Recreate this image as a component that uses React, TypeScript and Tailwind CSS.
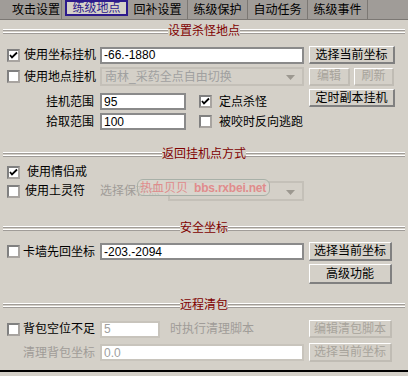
import React from "react";

const F = { fontFamily: '"Liberation Sans", "Noto Sans CJK SC", sans-serif' };

function Check({ checked }: { checked?: boolean }) {
  return (
    <div className="w-[13px] h-[13px] bg-white border-2 border-t-[#808080] border-l-[#808080] border-b-[#a8a4a0] border-r-[#a8a4a0] flex items-center justify-center shrink-0">
      {checked && (
        <svg width="9" height="9" viewBox="0 0 9 9">
          <path d="M1 4 L3 6.5 L8 1.5" stroke="#000" strokeWidth="1.8" fill="none" />
        </svg>
      )}
    </div>
  );
}

function Btn({ children, w, h = 18, disabled }: { children: React.ReactNode; w: number; h?: number; disabled?: boolean }) {
  return (
    <div
      style={{ width: w, height: h }}
      className={
        "flex items-center justify-center text-[12px] bg-[#d4d0c8] border-t border-l border-b-2 border-r-2 border-t-white border-l-white shrink-0 whitespace-nowrap " +
        (disabled ? "border-b-[#c0bcb4] border-r-[#c0bcb4] text-[#a8a49c]" : "border-b-[#808080] border-r-[#808080] text-black")
      }
    >
      {children}
    </div>
  );
}

function Input({ value, w, h = 17, disabled }: { value: string; w: number; h?: number; disabled?: boolean }) {
  return (
    <div
      style={{ width: w, height: h }}
      className={
        "bg-white border-2 flex items-center pl-[2px] text-[12px] shrink-0 " +
        (disabled ? "border-[#c8c4bc] text-[#a0a0a0]" : "border-[#8a8a8a] text-black")
      }
    >
      {value}
    </div>
  );
}

function Header({ title }: { title: string }) {
  const Line = () => (
    <div className="flex-1 flex flex-col">
      <div className="h-[1px] bg-white" />
      <div className="h-[1px] bg-[#a09c98]" />
      <div className="h-[1px]" />
      <div className="h-[1px] bg-white" />
      <div className="h-[1px] bg-[#a09c98]" />
    </div>
  );
  return (
    <div className="flex items-center h-[12px] px-[3px]">
      <Line />
      <span className="text-[12px] text-[#800000] leading-[12px] whitespace-nowrap">{title}</span>
      <Line />
    </div>
  );
}

export default function App() {
  const tabs = ["攻击设置", "练级地点", "回补设置", "练级保护", "自动任务", "练级事件"];
  return (
    <div style={F} className="w-[408px] h-[376px] bg-[#d4d0c8] relative overflow-hidden text-[12px] leading-[14px] text-black">
      {/* tab bar */}
      <div className="h-[20px] bg-[#a09c98] border-b border-[#7c7874] flex items-start">
        <div className="w-[62px] h-[19px] flex items-center pl-[12px] border-r border-[#7c7874] whitespace-nowrap">{tabs[0]}</div>
        <div className="w-[3px]" />
        <div className="w-[63px] h-[16px] border-2 border-[#2c1a8c] bg-[#d4d0c8] text-[#2c1a8c] flex items-center justify-center whitespace-nowrap">{tabs[1]}</div>
        {tabs.slice(2).map((t) => (
          <div key={t} className="w-[60px] h-[19px] flex items-center justify-center border-r border-[#7c7874] whitespace-nowrap">
            {t}
          </div>
        ))}
      </div>

      <div className="mt-[5px]">
        <Header title="设置杀怪地点" />
      </div>

      {/* section 1 */}
      <div className="pl-[7px]">
        <div className="flex items-center h-[18px] mt-[9px]">
          <div className="w-[93px] flex items-center gap-[4px]">
            <Check checked />
            <span>使用坐标挂机</span>
          </div>
          <Input value="-66.-1880" w={204} />
          <div className="w-[5px]" />
          <Btn w={86}>选择当前坐标</Btn>
        </div>
        <div className="flex items-center h-[19px] mt-[3px]">
          <div className="w-[93px] flex items-center gap-[4px]">
            <Check />
            <span>使用地点挂机</span>
          </div>
          <div className="w-[204px] h-[19px] border-2 border-[#c4c0b8] flex items-center pl-[3px] text-[#a0a0a0] relative">
            南林_采药全点自由切换
            <svg className="absolute right-[7px] top-[6px]" width="9" height="5" viewBox="0 0 9 5">
              <path d="M0 0 H9 L4.5 5 Z" fill="#9c9890" />
            </svg>
          </div>
          <div className="w-[5px]" />
          <Btn w={41} h={18} disabled>编辑</Btn>
          <div className="w-[4px]" />
          <Btn w={40} h={18} disabled>刷新</Btn>
        </div>
        <div className="flex mt-[3px]">
          <div className="flex flex-col pt-[4px] gap-[3px]">
            <div className="flex items-center h-[17px]">
              <div className="w-[93px] text-right pr-[6px]">挂机范围</div>
              <Input value="95" w={86} />
              <div className="w-[13px]" />
              <Check checked />
              <span className="ml-[7px]">定点杀怪</span>
            </div>
            <div className="flex items-center h-[17px]">
              <div className="w-[93px] text-right pr-[6px]">拾取范围</div>
              <Input value="100" w={86} />
              <div className="w-[13px]" />
              <Check />
              <span className="ml-[7px]">被咬时反向逃跑</span>
            </div>
          </div>
          <div className="ml-auto mr-[13px]">
            <Btn w={86}>定时副本挂机</Btn>
          </div>
        </div>
      </div>

      {/* section 2 */}
      <div className="mt-[18px]">
        <Header title="返回挂机点方式" />
      </div>
      <div className="pl-[7px]">
        <div className="flex items-center h-[14px] mt-[5px]">
          <Check checked />
          <span className="ml-[7px]">使用情侣戒</span>
        </div>
        <div className="flex items-center h-[20px] mt-[2px]">
          <div className="w-[93px] flex items-center gap-[5px]">
            <Check />
            <span>使用土灵符</span>
          </div>
          <span className="text-[#a09c98] w-[68px] whitespace-nowrap">选择保存点</span>
          <div className="w-[136px] h-[20px] border-2 border-[#c4c0b8] relative">
            <svg className="absolute right-[7px] top-[7px]" width="9" height="5" viewBox="0 0 9 5">
              <path d="M0 0 H9 L4.5 5 Z" fill="#9c9890" />
            </svg>
          </div>
        </div>
      </div>

      {/* section 3 */}
      <div className="mt-[21px]">
        <Header title="安全坐标" />
      </div>
      <div className="pl-[7px]">
        <div className="flex items-center h-[19px] mt-[8px]">
          <div className="w-[93px] flex items-center gap-[3px]">
            <Check />
            <span>卡墙先回坐标</span>
          </div>
          <Input value="-203.-2094" w={204} />
          <div className="w-[5px]" />
          <Btn w={83} h={19}>选择当前坐标</Btn>
        </div>
        <div className="flex h-[20px] mt-[3px] pl-[302px]">
          <Btn w={83} h={20}>高级功能</Btn>
        </div>
      </div>

      {/* section 4 */}
      <div className="mt-[15px]">
        <Header title="远程清包" />
      </div>
      <div className="pl-[7px]">
        <div className="flex items-center h-[18px] mt-[9px]">
          <div className="w-[93px] flex items-center gap-[3px]">
            <Check />
            <span>背包空位不足</span>
          </div>
          <Input value="5" w={60} disabled />
          <span className="ml-[10px] text-[#a09c98] w-[139px] whitespace-nowrap">时执行清理脚本</span>
          <Btn w={83} h={18} disabled>编辑清包脚本</Btn>
        </div>
        <div className="flex items-center h-[19px] mt-[5px]">
          <div className="w-[93px] text-[#a09c98] pl-[16px] whitespace-nowrap">清理背包坐标</div>
          <Input value="0.0" w={204} disabled />
          <div className="w-[5px]" />
          <Btn w={83} h={19} disabled>选择当前坐标</Btn>
        </div>
      </div>
      <div className="mt-[8px] h-[2px] bg-black" />

      {/* watermark overlay */}
      <div className="absolute left-[137px] top-[179px] w-[133px] h-[17px] rounded-[6px] border border-[#a8b0a8] bg-[#dcd8d0]/60 flex items-center pl-[2px] text-[#e08c8c] whitespace-nowrap">
        <span>热血贝贝</span>
        <span className="ml-[6px] font-bold tracking-[-0.2px]">bbs.rxbei.net</span>
      </div>
    </div>
  );
}
